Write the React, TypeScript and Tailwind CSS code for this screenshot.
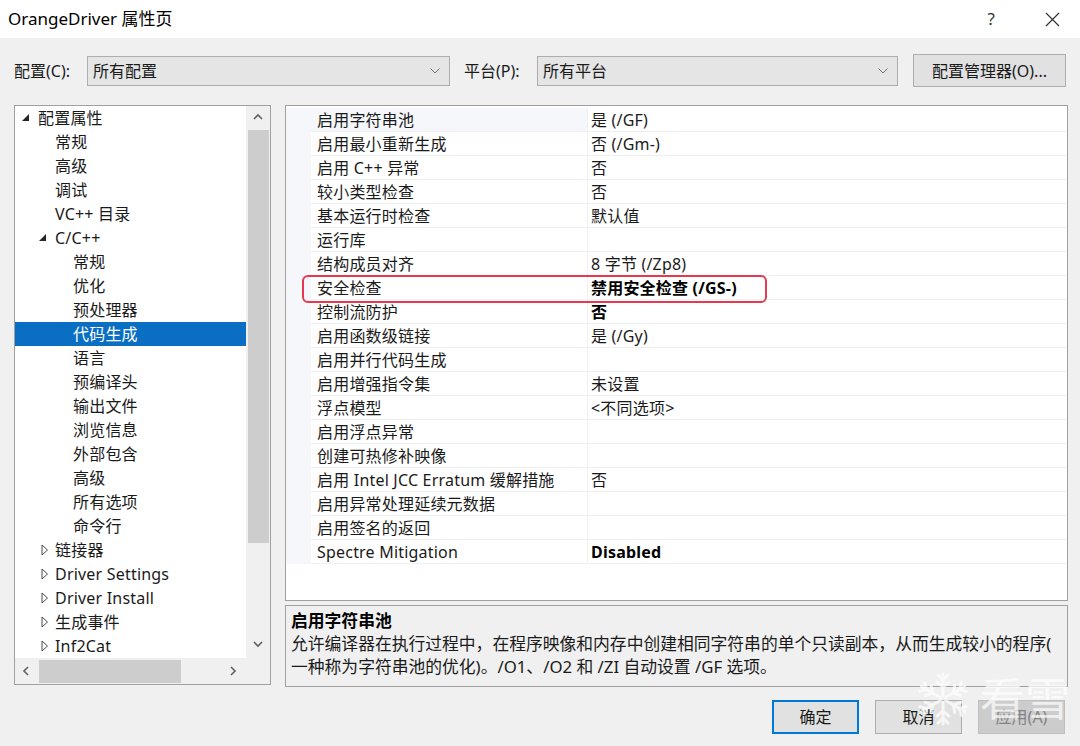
import React from 'react'

type TreeItem = {
  label: string
  level: 0 | 1 | 2
  exp?: 'open' | 'closed'
  selected?: boolean
}

const tree: TreeItem[] = [
  { label: '配置属性', level: 0, exp: 'open' },
  { label: '常规', level: 1 },
  { label: '高级', level: 1 },
  { label: '调试', level: 1 },
  { label: 'VC++ 目录', level: 1 },
  { label: 'C/C++', level: 1, exp: 'open' },
  { label: '常规', level: 2 },
  { label: '优化', level: 2 },
  { label: '预处理器', level: 2 },
  { label: '代码生成', level: 2, selected: true },
  { label: '语言', level: 2 },
  { label: '预编译头', level: 2 },
  { label: '输出文件', level: 2 },
  { label: '浏览信息', level: 2 },
  { label: '外部包含', level: 2 },
  { label: '高级', level: 2 },
  { label: '所有选项', level: 2 },
  { label: '命令行', level: 2 },
  { label: '链接器', level: 1, exp: 'closed' },
  { label: 'Driver Settings', level: 1, exp: 'closed' },
  { label: 'Driver Install', level: 1, exp: 'closed' },
  { label: '生成事件', level: 1, exp: 'closed' },
  { label: 'Inf2Cat', level: 1, exp: 'closed' },
]

type Prop = { name: string; value: string; bold?: boolean }

const props: Prop[] = [
  { name: '启用字符串池', value: '是 (/GF)' },
  { name: '启用最小重新生成', value: '否 (/Gm-)' },
  { name: '启用 C++ 异常', value: '否' },
  { name: '较小类型检查', value: '否' },
  { name: '基本运行时检查', value: '默认值' },
  { name: '运行库', value: '' },
  { name: '结构成员对齐', value: '8 字节 (/Zp8)' },
  { name: '安全检查', value: '禁用安全检查 (/GS-)', bold: true },
  { name: '控制流防护', value: '否', bold: true },
  { name: '启用函数级链接', value: '是 (/Gy)' },
  { name: '启用并行代码生成', value: '' },
  { name: '启用增强指令集', value: '未设置' },
  { name: '浮点模型', value: '<不同选项>' },
  { name: '启用浮点异常', value: '' },
  { name: '创建可热修补映像', value: '' },
  { name: '启用 Intel JCC Erratum 缓解措施', value: '否' },
  { name: '启用异常处理延续元数据', value: '' },
  { name: '启用签名的返回', value: '' },
  { name: 'Spectre Mitigation', value: 'Disabled', bold: true },
]

const indent = ['pl-[4px]', 'pl-[21px]', 'pl-[39px]']

function Chevron({ dir }: { dir: 'up' | 'down' | 'left' | 'right' }) {
  const pts = {
    up: '1,6 5,2 9,6',
    down: '1,2 5,6 9,2',
    left: '6,1 2,5 6,9',
    right: '2,1 6,5 2,9',
  }[dir]
  return (
    <svg width="10" height="10" viewBox="0 0 10 10">
      <polyline points={pts} fill="none" stroke="#606060" strokeWidth="1.6" />
    </svg>
  )
}

function Dropdown({ text, width }: { text: string; width: string }) {
  return (
    <div className={`${width} h-[30px] flex items-center justify-between bg-[#e5e5e5] border border-[#adadad] pl-[5px] pr-[9px]`}>
      <span>{text}</span>
      <svg width="10" height="6" viewBox="0 0 10 6">
        <polyline points="0.5,0.5 5,5 9.5,0.5" fill="none" stroke="#707070" strokeWidth="1" />
      </svg>
    </div>
  )
}

function TreePanel() {
  return (
    <div className="w-[257px] h-[580px] border border-[#a0a0a0] flex flex-col bg-white">
      <div className="flex h-[552px]">
        <div className="w-[231px] flex flex-col">
          {tree.map((t, i) => (
            <div
              key={i}
              className={`h-[24px] flex items-center ${indent[t.level]} ${t.selected ? 'bg-[#0a6fc2] text-white' : 'text-[#1a1a1a]'}`}
            >
              <div className="w-[19px] h-[24px] flex items-center">
                {t.exp === 'open' && (
                  <svg width="10" height="10" viewBox="0 0 10 10" className="ml-[3px]">
                    <polygon points="7,1 7,8 0,8" fill="#262626" />
                  </svg>
                )}
                {t.exp === 'closed' && (
                  <svg width="10" height="12" viewBox="0 0 10 12" className="ml-[5px]">
                    <polygon points="1,1 6.5,6 1,11" fill="none" stroke="#4a4a4a" strokeWidth="1" />
                  </svg>
                )}
              </div>
              <span className="whitespace-nowrap tracking-[0.2px]">{t.label}</span>
            </div>
          ))}
        </div>
        <div className="w-[24px] bg-[#f0f0f0] flex flex-col items-center">
          <div className="h-[24px] flex items-center justify-center">
            <Chevron dir="up" />
          </div>
          <div className="w-[21px] h-[413px] bg-[#cdcdcd]" />
          <div className="flex-1" />
          <div className="h-[26px] flex items-center justify-center">
            <Chevron dir="down" />
          </div>
        </div>
      </div>
      <div className="flex h-[26px] bg-[#f0f0f0]">
        <div className="w-[231px] flex items-center">
          <div className="w-[24px] flex justify-center">
            <Chevron dir="left" />
          </div>
          <div className="w-[142px] h-[23px] bg-[#cdcdcd]" />
          <div className="flex-1" />
          <div className="w-[24px] flex justify-center">
            <Chevron dir="right" />
          </div>
        </div>
        <div className="w-[24px] bg-[#f0f0f0]" />
      </div>
    </div>
  )
}

function PropGrid() {
  return (
    <div className="relative h-[496px] border border-[#a0a0a0] bg-white pt-[2px]">
      {props.map((p, i) => (
        <div key={i} className="flex h-[24px]">
          <div className="w-[25px] bg-[#f5f7fa]" />
          <div
            className={`w-[276px] flex items-center pl-[6px] border-b border-[#eef0f3] whitespace-nowrap tracking-[0.2px] ${i === 0 ? 'bg-[#f5f7fa]' : ''}`}
          >
            {p.name}
          </div>
          <div
            className={`flex-1 flex items-center pl-[3px] border-l border-b border-[#eef0f3] whitespace-nowrap tracking-[0.2px] ${p.bold ? 'font-bold text-black' : ''}`}
          >
            {p.value}
          </div>
        </div>
      ))}
      <div className="absolute left-[16px] top-[169px] w-[465px] h-[28px] border-[2.5px] border-[#e8384f] rounded-[6px]" />
    </div>
  )
}

function Snowflake() {
  const spokes = [0, 60, 120, 180, 240, 300]
  return (
    <svg width="50" height="58" viewBox="-25 -29 50 58">
      {spokes.map((a) => (
        <g key={a} transform={`rotate(${a})`} stroke="white" strokeWidth="3" strokeLinecap="round" fill="none">
          <line x1="0" y1="-3" x2="0" y2="-25" />
          <polyline points="-6,-17 0,-12 6,-17" />
          <polyline points="-5,-24 0,-19 5,-24" />
        </g>
      ))}
    </svg>
  )
}

export default function App() {
  return (
    <div className="relative w-[1080px] h-[746px] bg-[#f0f0f0] overflow-hidden text-[16px] text-[#1a1a1a] font-['Noto_Sans','Noto_Sans_CJK_SC',sans-serif]">
      {/* title bar */}
      <div className="h-[38px] bg-white flex items-center justify-between pl-[8px] pr-[20px]">
        <span className="text-[17px] text-black">OrangeDriver 属性页</span>
        <div className="flex items-center gap-[50px]">
          <span className="text-[17px] text-[#333]">?</span>
          <svg width="15" height="15" viewBox="0 0 15 15">
            <path d="M1 1 L14 14 M14 1 L1 14" stroke="#333" strokeWidth="1.2" />
          </svg>
        </div>
      </div>

      {/* config row */}
      <div className="mt-[16px] flex items-center h-[33px] pl-[14px]">
        <span className="w-[73px]">配置(C):</span>
        <Dropdown text="所有配置" width="w-[363px]" />
        <span className="ml-[14px] w-[73px]">平台(P):</span>
        <Dropdown text="所有平台" width="w-[361px]" />
        <button className="ml-[15px] w-[153px] h-[33px] bg-[#e1e1e1] border border-[#adadad] text-[#1a1a1a]">
          配置管理器(O)...
        </button>
      </div>

      {/* main area */}
      <div className="mt-[18px] flex pl-[14px] gap-[14px]">
        <TreePanel />
        <div className="w-[783px] flex flex-col gap-[4px]">
          <PropGrid />
          <div className="h-[82px] border border-[#a0a0a0] bg-[#f0f0f0] pl-[5px] pt-[3px] text-[16.8px] leading-[23px] whitespace-nowrap">
            <div className="font-bold text-black">启用字符串池</div>
            <div>允许编译器在执行过程中，在程序映像和内存中创建相同字符串的单个只读副本，从而生成较小的程序(</div>
            <div>一种称为字符串池的优化)。/O1、/O2 和 /ZI 自动设置 /GF 选项。</div>
          </div>
        </div>
      </div>

      {/* buttons */}
      <div className="mt-[13px] flex justify-end gap-[16px] pr-[15px]">
        <button className="w-[87px] h-[34px] bg-[#e1e1e1] border-2 border-[#0078d7] text-[#1a1a1a]">确定</button>
        <button className="w-[87px] h-[34px] bg-[#e1e1e1] border border-[#adadad] text-[#1a1a1a]">取消</button>
        <button className="w-[87px] h-[34px] bg-[#cccccc] border border-[#bfbfbf] text-[#838383]">应用(A)</button>
      </div>

      {/* watermark */}
      <div className="absolute left-[918px] top-[670px] flex items-center gap-[12px] opacity-70">
        <Snowflake />
        <span className="text-[45px] leading-[58px] text-white">看雪</span>
      </div>
    </div>
  )
}
